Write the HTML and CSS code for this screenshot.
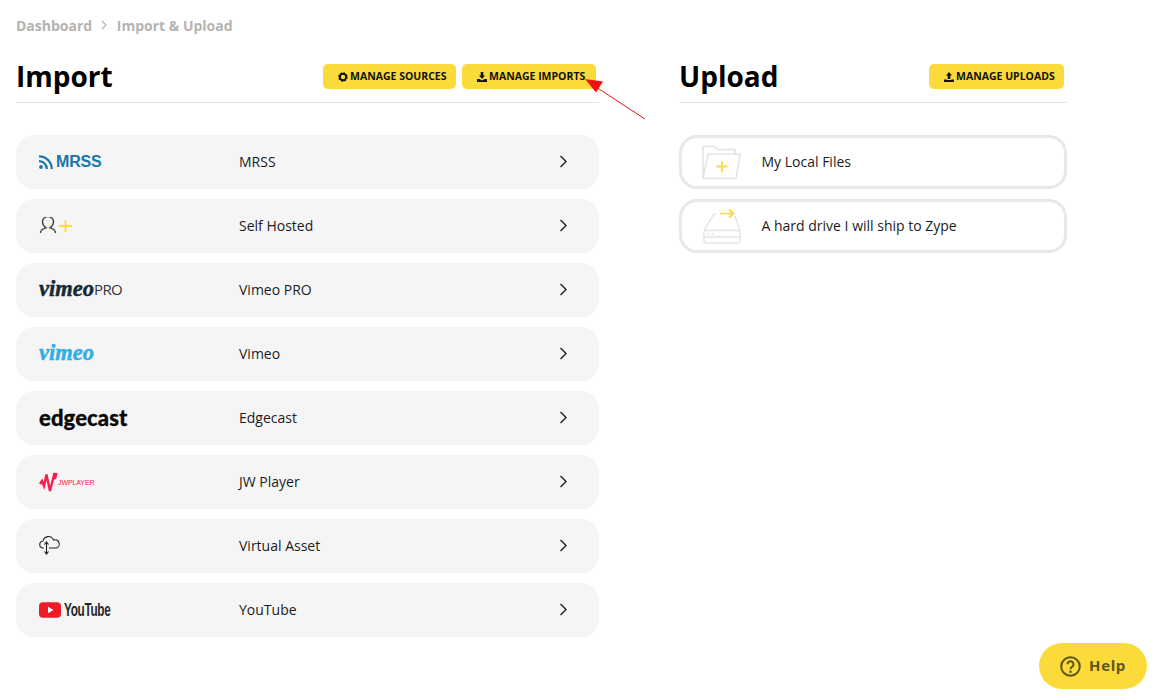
FILE: index.html
```html
<!DOCTYPE html>
<html lang="en">
<head>
<meta charset="utf-8">
<title>Import &amp; Upload</title>
<link rel="stylesheet" href="styles.css">
</head>
<body>
<nav class="crumbs"><span>Dashboard</span>
<svg class="crumb-sep" width="8" height="10" viewBox="0 0 8 10"><path d="M2 1l4 4-4 4" fill="none" stroke="#b5b3b0" stroke-width="1.2"/></svg>
<span>Import &amp; Upload</span></nav>
<main class="columns">
<section class="col-import">
<header class="head">
<h1>Import</h1>
<div class="actions">
<a class="btn btn-sources"><svg class="ico" width="10" height="10" viewBox="0 0 10 10"><circle cx="5" cy="5" r="3.2" fill="none" stroke="#111" stroke-width="2"/><circle cx="5" cy="5" r="4.2" fill="none" stroke="#111" stroke-width="1.2" stroke-dasharray="1.6 1.7"/></svg><span>MANAGE SOURCES</span></a>
<a class="btn btn-imports"><svg class="ico" width="10" height="10" viewBox="0 0 10 10"><path d="M3.7 0h2.6v3.6H8L5 7 2 3.6h1.7zM0 7h2.6L5 8.6 7.4 7H10v3H0z" fill="#111"/></svg><span>MANAGE IMPORTS</span></a>
</div>
</header>
<ul class="list">
<li class="row"><span class="logo logo-mrss"><svg class="rss" width="15" height="14" viewBox="0 0 15 14"><circle cx="2" cy="12" r="1.900" fill="#1a75ad"/><path d="M0 6.200a7.600 7.600 0 0 1 7.800 7.800M0 1.300a12.500 12.500 0 0 1 12.700 12.700" fill="none" stroke="#1a75ad" stroke-width="2.200"/></svg><span class="mrss">MRSS</span></span><span class="name">MRSS</span><svg class="chev" width="9" height="13" viewBox="0 0 9 13"><path d="M1.500 1l5.500 5.500L1.500 12" fill="none" stroke="#222" stroke-width="1.4"/></svg></li>
<li class="row"><span class="logo logo-self"><svg width="34" height="18" viewBox="0 0 34 18"><path d="M1.500 16c0-3 2-4.200 5.500-5.200-2.700-1.800-3.500-3.800-3.500-5.800a5.500 5.500 0 0 1 11 0c0 2-.8 4-3.500 5.800 3.500 1 5.500 2.200 5.500 5.200" fill="none" stroke="#444" stroke-width="1.400"/><path d="M20 9h13M26.500 3v12" fill="none" stroke="#fadb3a" stroke-width="1.800"/></svg></span><span class="name">Self Hosted</span><svg class="chev" width="9" height="13" viewBox="0 0 9 13"><path d="M1.500 1l5.500 5.500L1.500 12" fill="none" stroke="#222" stroke-width="1.4"/></svg></li>
<li class="row"><span class="logo"><span class="vimeo vimeo-dark">vimeo</span><span class="pro">PRO</span></span><span class="name">Vimeo PRO</span><svg class="chev" width="9" height="13" viewBox="0 0 9 13"><path d="M1.500 1l5.500 5.500L1.500 12" fill="none" stroke="#222" stroke-width="1.4"/></svg></li>
<li class="row"><span class="logo"><span class="vimeo vimeo-blue">vimeo</span></span><span class="name">Vimeo</span><svg class="chev" width="9" height="13" viewBox="0 0 9 13"><path d="M1.500 1l5.500 5.500L1.500 12" fill="none" stroke="#222" stroke-width="1.4"/></svg></li>
<li class="row"><span class="logo"><span class="edgecast">edgecast</span></span><span class="name">Edgecast</span><svg class="chev" width="9" height="13" viewBox="0 0 9 13"><path d="M1.500 1l5.500 5.500L1.500 12" fill="none" stroke="#222" stroke-width="1.4"/></svg></li>
<li class="row"><span class="logo logo-jw"><svg width="19" height="21" viewBox="0 0 19 21"><path d="M1 12l2-3 2 5 2.500-11.500 3.500 16.500 4.500-18 .5 6 1.500-6" fill="none" stroke="#f2204f" stroke-width="2.400"/></svg><span class="jw">JWPLAYER</span></span><span class="name">JW Player</span><svg class="chev" width="9" height="13" viewBox="0 0 9 13"><path d="M1.500 1l5.500 5.500L1.500 12" fill="none" stroke="#222" stroke-width="1.4"/></svg></li>
<li class="row"><span class="logo"><svg width="22" height="20" viewBox="0 0 22 20"><path d="M5 13H4.500a3.500 3.500 0 0 1-.5-7A5.500 5.500 0 0 1 14.500 5a4 4 0 0 1 3 8H10" fill="none" stroke="#222" stroke-width="1.100"/><path d="M7.500 7v12M5.500 9.500l2-2.500 2 2.500M5.500 16.500l2 2.500 2-2.500" fill="none" stroke="#222" stroke-width="1.100"/></svg></span><span class="name">Virtual Asset</span><svg class="chev" width="9" height="13" viewBox="0 0 9 13"><path d="M1.500 1l5.500 5.500L1.500 12" fill="none" stroke="#222" stroke-width="1.4"/></svg></li>
<li class="row"><span class="logo logo-yt"><svg width="23" height="16" viewBox="0 0 23 16"><rect width="22" height="15.500" y=".3" rx="4" fill="#ee1c24"/><path d="M9 4.800v6.400l5.500-3.200z" fill="#fff"/></svg><span class="yt">YouTube</span></span><span class="name">YouTube</span><svg class="chev" width="9" height="13" viewBox="0 0 9 13"><path d="M1.500 1l5.500 5.500L1.500 12" fill="none" stroke="#222" stroke-width="1.4"/></svg></li>
</ul>
</section>
<section class="col-upload">
<header class="head">
<h1>Upload</h1>
<div class="actions">
<a class="btn btn-uploads"><svg class="ico" width="10" height="10" viewBox="0 0 10 10"><path d="M5 0l3 3.400H6.300V7H3.700V3.400H2zM0 7.500h2.600v.6h4.800v-.6H10V10H0z" fill="#111"/></svg><span>MANAGE UPLOADS</span></a>
</div>
</header>
<ul class="list">
<li class="row row-up"><span class="up-ico"><svg width="40" height="35" viewBox="0 0 40 35"><path d="M1 33.500V1.500h11l3 3h18V9M1 33.500h33l4-24.500H6L1 33.500" fill="none" stroke="#e3e3e3" stroke-width="1.500" stroke-linejoin="round"/><path d="M14.500 21.500h11M20 16v11" fill="none" stroke="#fadb3a" stroke-width="1.800"/></svg></span><span class="up-name">My Local Files</span></li>
<li class="row row-up"><span class="up-ico"><svg width="40" height="35" viewBox="0 0 40 35"><path d="M14 5h-2L2 21.500M38 21.500L33 7M4 21.500h32a2 2 0 0 1 2 2v8.500a2 2 0 0 1-2 2H4a2 2 0 0 1-2-2v-8.500a2 2 0 0 1 2-2zM2 28h36" fill="none" stroke="#e3e3e3" stroke-width="1.400"/><circle cx="6.500" cy="25" r="1.100" fill="#e3e3e3"/><circle cx="10.500" cy="25" r="1.100" fill="#e3e3e3"/><path d="M18 4.500h13M27 0.500L31.500 4.500 27 8.500" fill="none" stroke="#fadb3a" stroke-width="1.700"/></svg></span><span class="up-name">A hard drive I will ship to Zype</span></li>
</ul>
</section>
</main>
<svg class="pointer" width="62" height="42" viewBox="0 0 62 42"><path d="M61 41L12 9" stroke="#f01010" stroke-width="1" fill="none"/><path d="M1 1l18 2.500-7 11z" fill="#f01010"/></svg>
<a class="help"><svg width="21" height="21" viewBox="0 0 21 21"><circle cx="10.500" cy="10.500" r="9.300" fill="none" stroke="#5f5414" stroke-width="2"/><path d="M7.500 8.300a3 3 0 1 1 4.700 2.400c-1.100.8-1.700 1.200-1.700 2.500" fill="none" stroke="#5f5414" stroke-width="2"/><circle cx="10.500" cy="15.800" r="1.200" fill="#5f5414"/></svg><span class="help-text">Help</span></a>
</body>
</html>
```
FILE: styles.css
```css
* { box-sizing: border-box; }
html, body { margin: 0; }
body {
  width: 1162px;
  height: 700px;
  padding: 15px 16px 0;
  overflow: hidden;
  background: #fff;
  font-family: "Open Sans", sans-serif;
  color: #1c1c1c;
  position: relative;
}
.crumbs {
  display: flex;
  align-items: center;
  gap: 8.3px;
  height: 20px;
  font-size: 14px;
  font-weight: 700;
  color: #b5b3b0;
}
.columns {
  display: grid;
  grid-template-columns: 583px 388px;
  gap: 80px;
  margin-top: 17px;
}
.head {
  display: flex;
  justify-content: space-between;
  align-items: flex-start;
  height: 51px;
  padding-top: 12px;
  border-bottom: 1px solid #e2e2e2;
}
.head h1 {
  margin: -7px 0 0;
  font-size: 28px;
  line-height: 38px;
  font-weight: 700;
  color: #000;
}
.actions { display: flex; gap: 6px; margin-right: 3px; }
.btn {
  display: flex;
  align-items: center;
  gap: 2px;
  height: 25px;
  padding-left: 15px;
  border-radius: 5px;
  background: #fadb3a;
  font-size: 10.5px;
  font-weight: 700;
  color: #111;
}
.btn span { position: relative; top: -1px; }
.btn-sources { width: 133px; }
.btn-imports { width: 134px; }
.btn-uploads { width: 135px; }
.list {
  list-style: none;
  margin: 32px 0 0;
  padding: 0;
  display: flex;
  flex-direction: column;
  gap: 10px;
}
.row {
  display: flex;
  align-items: center;
  height: 54px;
  padding-left: 23px;
  padding-bottom: 2px;
  border-radius: 18px;
  background: #f5f5f5;
  font-size: 14px;
}
.logo {
  display: flex;
  align-items: center;
  width: 200px;
  height: 20px;
  flex: none;
}
.logo-mrss { padding-top: 2px; }
.logo-self svg { position: relative; top: 1px; }
.logo-jw { padding-top: 2px; }
.logo-yt { padding-top: 2px; }
.name { flex: 1; }
.chev { margin-right: 31px; }
.rss { margin-right: 2px; }
.mrss {
  font-family: "Liberation Sans", sans-serif;
  font-weight: 700;
  font-size: 16px;
  letter-spacing: -.2px;
  color: #1a75ad;
}
.vimeo {
  font-family: "Liberation Serif", serif;
  font-style: italic;
  font-weight: 700;
  font-size: 22.5px;
  line-height: 20px;
  -webkit-text-stroke: .5px currentColor;
}
.vimeo-dark { color: #162b36; }
.vimeo-blue { color: #30aee6; }
.pro {
  font-size: 15px;
  letter-spacing: -.6px;
  color: #333;
}
.edgecast {
  font-family: "Lato", sans-serif;
  font-weight: 900;
  font-size: 22px;
  letter-spacing: .1px;
  -webkit-text-stroke: .3px currentColor;
  color: #0a0a0a;
}
.jw {
  font-family: "Liberation Sans", sans-serif;
  font-size: 7px;
  letter-spacing: -.1px;
  color: #f2204f;
}
.yt {
  font-family: "Liberation Sans", sans-serif;
  font-weight: 700;
  font-size: 19px;
  letter-spacing: -.5px;
  margin-left: 2px;
  color: #282828;
  transform: scaleX(.62);
  transform-origin: left;
}
.row-up {
  padding-left: 20px;
  padding-bottom: 0;
  background: #fff;
  border: 3px solid #e8e8e8;
}
.up-ico {
  display: flex;
  width: 59.5px;
  flex: none;
}
.up-name { flex: 1; position: relative; top: -1px; }
.pointer {
  position: absolute;
  left: 584px;
  top: 78px;
}
.help {
  position: absolute;
  left: 1039px;
  top: 643px;
  width: 108px;
  height: 46px;
  border-radius: 23px;
  background: #fadb3a;
  display: flex;
  align-items: center;
  justify-content: center;
  gap: 8px;
  font-size: 15px;
  font-weight: 700;
  letter-spacing: .6px;
  color: #5f5414;
}
.help-text { position: relative; top: -1px; }
```
